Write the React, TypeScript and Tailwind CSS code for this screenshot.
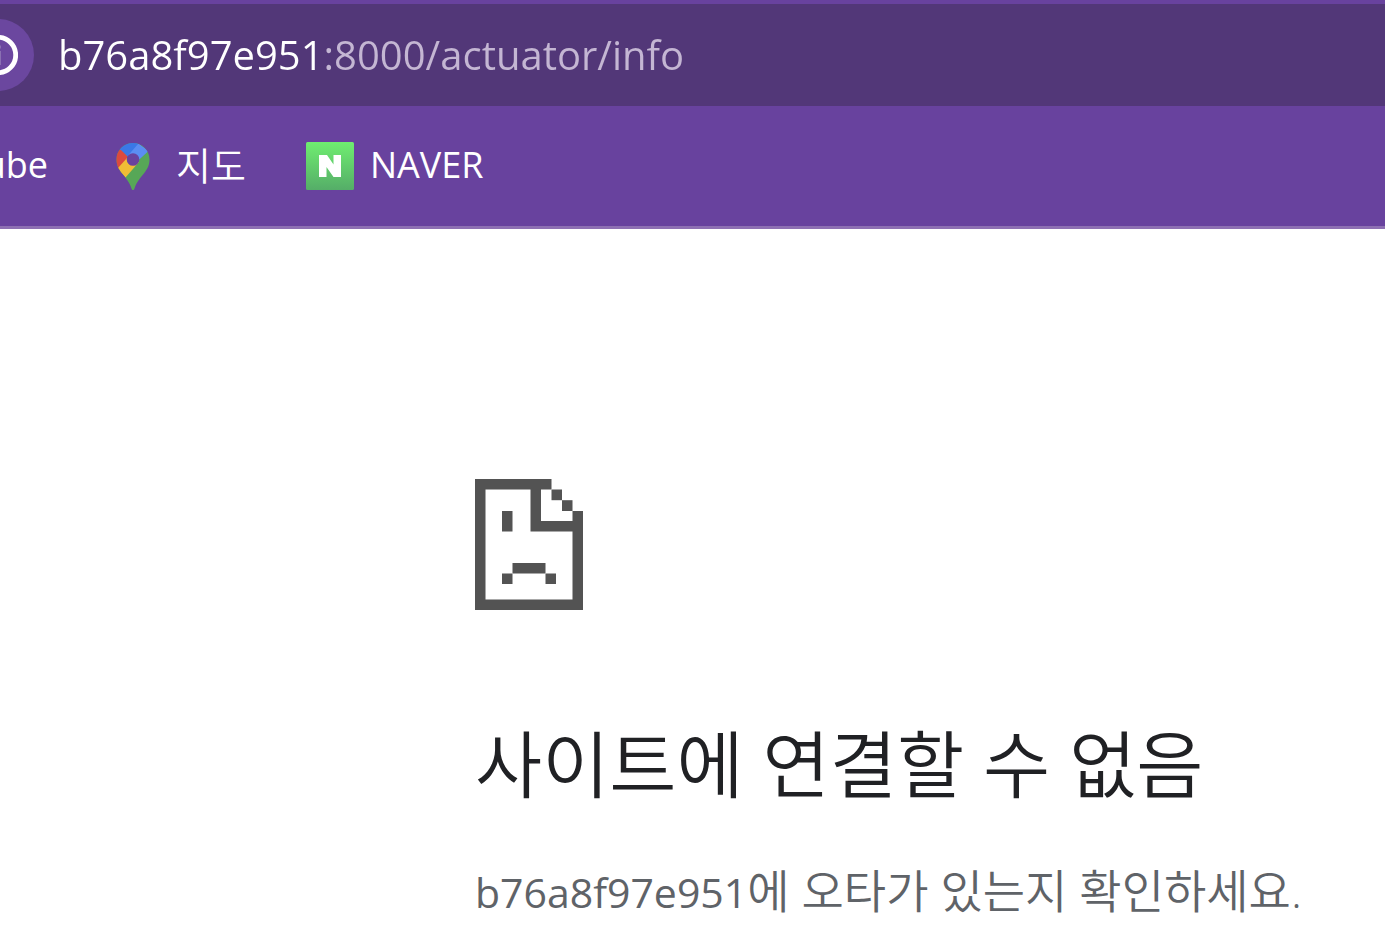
import { useState } from "react"

function SiteInfoIcon() {
  return (
    <svg viewBox="0 0 40 40" className="h-10 w-10" fill="none" aria-hidden="true">
      <circle cx="20" cy="20" r="17.7" stroke="#ffffff" strokeWidth="4.8" />
      <rect x="19" y="16" width="4" height="14" fill="#8a70b2" />
      <rect x="19" y="10.500" width="4" height="3" fill="#8a70b2" />
    </svg>
  )
}

function MapsIcon() {
  return (
    <svg viewBox="0 0 34 48" className="h-12 w-[34px]" aria-hidden="true">
      <defs>
        <clipPath id="pin">
          <path d="M17 1C7.900 1 .5 8.200 .5 17.500c0 6 2.300 9.700 5.600 14 4 5 7.400 8.500 9.300 14.700.4 1.300.9 1.800 1.600 1.800s1.200-.5 1.600-1.800c1.900-6.200 5.300-9.700 9.300-14.700 3.300-4.300 5.600-8 5.600-14C33.500 8.200 26.100 1 17 1z" />
        </clipPath>
      </defs>
      <g clipPath="url(#pin)">
        <rect width="34" height="48" fill="#57a757" />
        <path d="M0 4.500L12.500 15.500 23 3V0H0z" fill="#3a78e7" />
        <path d="M22.500 1.500L12 13.500l8 7L32.500 9z" fill="#5b8df2" />
        <path d="M5 8L12.500 15.500 2 28H0V8z" fill="#db4a3e" />
        <path d="M11 16L1.500 26.500 9.500 35.500 23 20z" fill="#f0bd36" />
      </g>
      <circle cx="17" cy="17.500" r="6.300" fill="#68429e" />
    </svg>
  )
}

function NaverIcon() {
  return (
    <svg viewBox="0 0 48 48" className="h-12 w-12" aria-hidden="true">
      <defs>
        <linearGradient id="naver" x1="0" y1="0" x2="0" y2="1">
          <stop offset="0" stopColor="#6fee70" />
          <stop offset="1" stopColor="#55ad68" />
        </linearGradient>
      </defs>
      <rect width="48" height="48" rx="1.500" fill="url(#naver)" />
      <path d="M13 13h8l6.500 9.500V13H35v22h-7.500L20.500 25v10H13z" fill="#ffffff" />
    </svg>
  )
}

function SadFileIcon() {
  return (
    <svg viewBox="0 0 108 131" className="h-[131px] w-[108px]" fill="#535353" aria-hidden="true">
      {/* page outline with the folded corner */}
      <path d="M0 0H76.500V10.500H66V42H97.500V32H108V131H0zM10.500 10.500V120.500H97.500V52.500H55.500V10.500z" fillRule="evenodd" />
      <rect x="76.500" y="10.500" width="10.500" height="10.700" />
      <rect x="87" y="21.200" width="10.500" height="10.800" />
      {/* face */}
      <rect x="27" y="32" width="10.500" height="20.500" />
      <rect x="37.500" y="84" width="33" height="10.500" />
      <rect x="27" y="94.500" width="10.500" height="10.500" />
      <rect x="70.500" y="94.500" width="10.500" height="10.500" />
    </svg>
  )
}

const bookmarks = [
  { label: "지도", icon: <MapsIcon />, style: "gap-[26px] text-[38px] font-[350]" },
  { label: "NAVER", icon: <NaverIcon />, style: "gap-4 text-[36px]" },
]

export default function App() {
  const [url, setUrl] = useState("b76a8f97e951:8000/actuator/info")

  return (
    <div className="min-h-screen overflow-hidden bg-white font-['Open_Sans','Noto_Sans_CJK_KR',sans-serif]">
      <header className="border-b-3 border-[#8e70b3] bg-[#68429e] pt-1">
        {/* Address bar */}
        <div className="flex h-[102px] items-center gap-6 bg-[#523778]">
          <button
            type="button"
            aria-label="사이트 정보 보기"
            className="-ml-[38px] flex size-[72px] shrink-0 items-center justify-center rounded-full bg-[#6b479f]"
          >
            <SiteInfoIcon />
          </button>
          <input
            type="text"
            aria-label="주소창"
            spellCheck={false}
            value={url}
            onChange={(e) => setUrl(e.target.value)}
            className="h-16 min-w-0 flex-1 bg-[linear-gradient(90deg,#ffffff_265px,#c4b6d3_265px)] bg-clip-text pb-0.5 text-[40px] text-transparent caret-white outline-none"
          />
        </div>

        {/* Bookmarks */}
        <nav className="flex h-[120px] items-center text-[36px] text-white">
          <a href="#youtube" className="flex w-12 shrink-0 justify-end overflow-hidden pb-0.5">
            YouTube
          </a>
          <div className="ml-[68px] flex items-center gap-[60px]">
            {bookmarks.map((item) => (
              <a key={item.label} href="#bookmark" className={`flex items-center whitespace-nowrap ${item.style}`}>
                {item.icon}
                <span className="pb-0.5">{item.label}</span>
              </a>
            ))}
          </div>
        </nav>
      </header>

      <main className="ml-[475px] pt-[250px]">
        <SadFileIcon />
        <h1 className="mt-[100px] text-[73px] leading-[108px] font-[350] whitespace-nowrap text-[#202124]">
          사이트에 연결할 수 없음
        </h1>
        <p className="mt-9 text-[46px] leading-[72px] font-[350] whitespace-nowrap text-[#5f6368]">
          <span className="text-[41px] font-normal">b76a8f97e951</span>에 오타가 있는지 확인하세요.
        </p>
      </main>
    </div>
  )
}
